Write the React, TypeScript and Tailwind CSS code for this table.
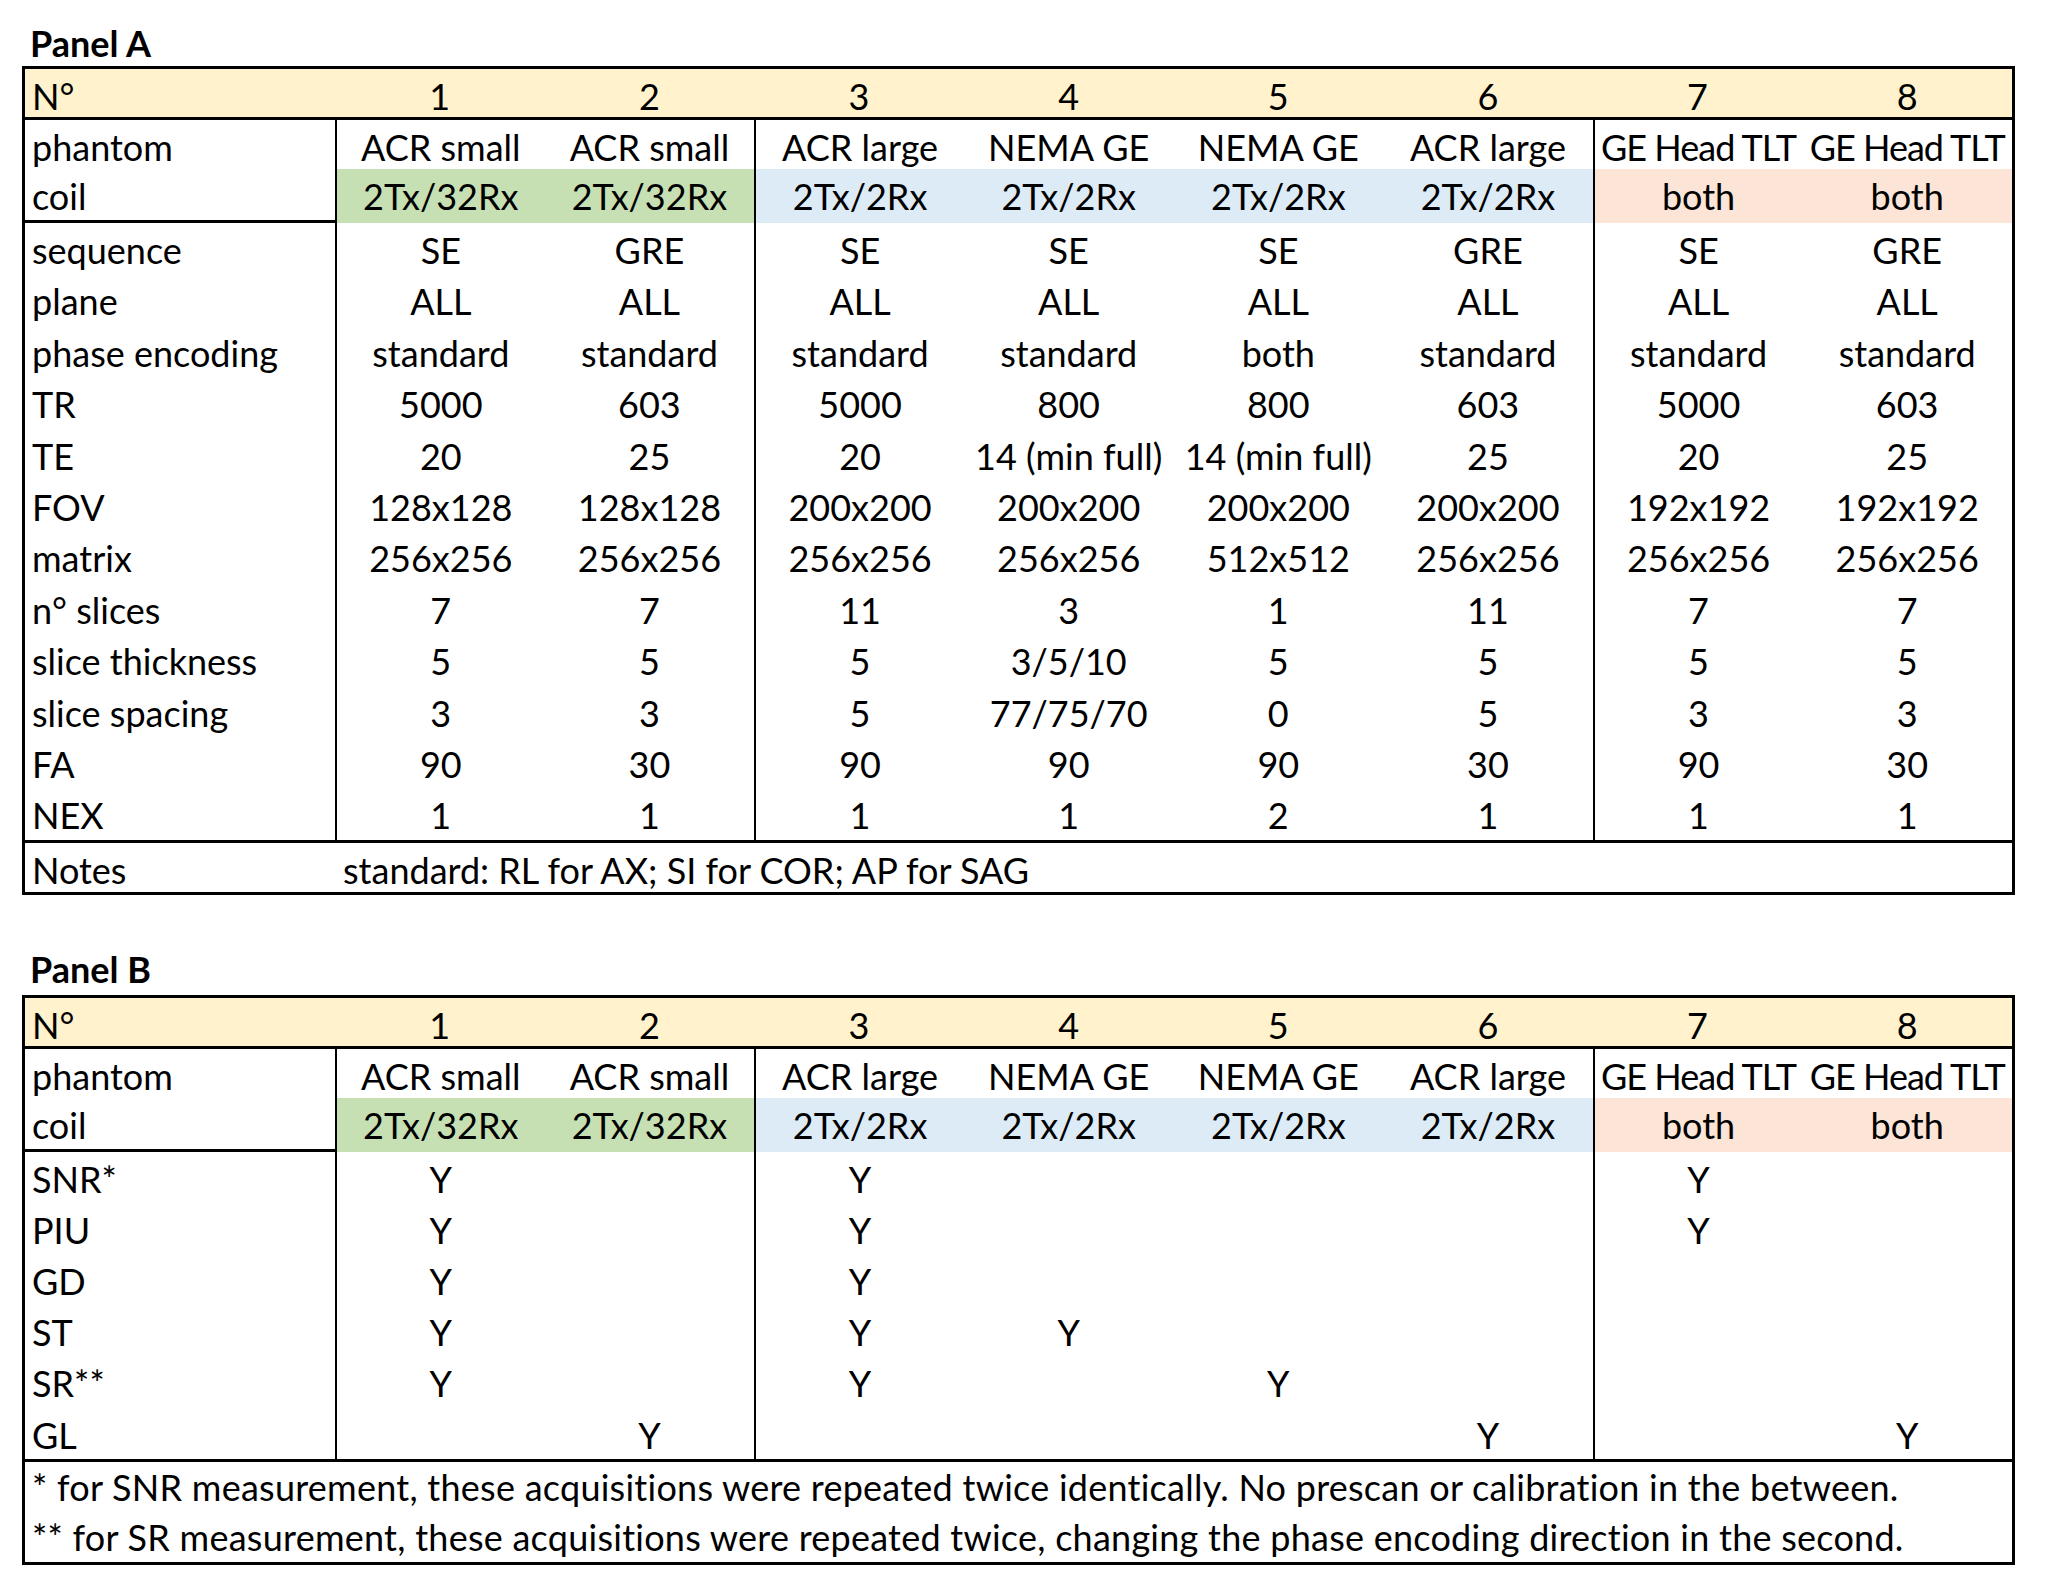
import clsx from "clsx";

type RowDef = { label: string; values: string[] };

const setupRows: RowDef[] = [
  { label: "sequence", values: ["SE", "GRE", "SE", "SE", "SE", "GRE", "SE", "GRE"] },
  { label: "plane", values: ["ALL", "ALL", "ALL", "ALL", "ALL", "ALL", "ALL", "ALL"] },
  {
    label: "phase encoding",
    values: ["standard", "standard", "standard", "standard", "both", "standard", "standard", "standard"],
  },
  { label: "TR", values: ["5000", "603", "5000", "800", "800", "603", "5000", "603"] },
  { label: "TE", values: ["20", "25", "20", "14 (min full)", "14 (min full)", "25", "20", "25"] },
  {
    label: "FOV",
    values: ["128x128", "128x128", "200x200", "200x200", "200x200", "200x200", "192x192", "192x192"],
  },
  {
    label: "matrix",
    values: ["256x256", "256x256", "256x256", "256x256", "512x512", "256x256", "256x256", "256x256"],
  },
  { label: "n° slices", values: ["7", "7", "11", "3", "1", "11", "7", "7"] },
  { label: "slice thickness", values: ["5", "5", "5", "3/5/10", "5", "5", "5", "5"] },
  { label: "slice spacing", values: ["3", "3", "5", "77/75/70", "0", "5", "3", "3"] },
  { label: "FA", values: ["90", "30", "90", "90", "90", "30", "90", "30"] },
  { label: "NEX", values: ["1", "1", "1", "1", "2", "1", "1", "1"] },
];

const checkRows: RowDef[] = [
  { label: "SNR*", values: ["Y", "", "Y", "", "", "", "Y", ""] },
  { label: "PIU", values: ["Y", "", "Y", "", "", "", "Y", ""] },
  { label: "GD", values: ["Y", "", "Y", "", "", "", "", ""] },
  { label: "ST", values: ["Y", "", "Y", "Y", "", "", "", ""] },
  { label: "SR**", values: ["Y", "", "Y", "", "Y", "", "", ""] },
  { label: "GL", values: ["", "Y", "", "", "", "Y", "", "Y"] },
];

const numbers = ["1", "2", "3", "4", "5", "6", "7", "8"];
const phantoms = [
  "ACR small",
  "ACR small",
  "ACR large",
  "NEMA GE",
  "NEMA GE",
  "ACR large",
  "GE Head TLT",
  "GE Head TLT",
];
const coils = ["2Tx/32Rx", "2Tx/32Rx", "2Tx/2Rx", "2Tx/2Rx", "2Tx/2Rx", "2Tx/2Rx", "both", "both"];

// coil groups: green = small ACR, blue = large ACR / NEMA, peach = GE head
const coilBg = [
  "bg-[#C6E0B4]",
  "bg-[#C6E0B4]",
  "bg-[#DDEBF7]",
  "bg-[#DDEBF7]",
  "bg-[#DDEBF7]",
  "bg-[#DDEBF7]",
  "bg-[#FCE4D6]",
  "bg-[#FCE4D6]",
];

// vertical separators sit left of columns 1, 3 and 7
const divider = [true, false, true, false, false, false, true, false];

function Row({
  label,
  values,
  height,
  lines = true,
  bgs,
}: {
  label: string;
  values: string[];
  height: string;
  lines?: boolean;
  bgs?: string[];
}) {
  return (
    <div className={clsx("grid grid-cols-[310px_repeat(8,minmax(0,1fr))]", height)}>
      <div className="flex items-center pl-[7px] whitespace-nowrap">{label}</div>
      {values.map((v, i) => (
        <div
          key={i}
          className={clsx(
            "flex items-center justify-center whitespace-nowrap",
            lines && divider[i] && "border-l-2 border-black",
            v === "GE Head TLT" && "tracking-[-1px]",
            bgs?.[i]
          )}
        >
          {v}
        </div>
      ))}
    </div>
  );
}

function TableHead() {
  return (
    <>
      <div className="h-[51px] border-b-[3px] border-black bg-[#FFF2CC]">
        <Row label="N°" values={numbers} height="h-full" lines={false} />
      </div>
      <div className="border-b-[3px] border-black">
        <Row label="phantom" values={phantoms} height="h-[49px]" />
        <Row label="coil" values={coils} height="h-[51px]" bgs={coilBg} />
      </div>
    </>
  );
}

function PanelTitle({ children, className }: { children: string; className?: string }) {
  return (
    <div className={clsx("h-[38px] pl-[8px] leading-[38px] font-bold", className)}>
      {children}
    </div>
  );
}

export default function App() {
  return (
    <div className="min-h-screen bg-white pt-[24px] pl-[22px] text-[36px] text-black font-['Lato',sans-serif]">
      <PanelTitle className="mb-[4px]">Panel A</PanelTitle>
      <div className="w-[1993px] border-[3px] border-black">
        <TableHead />
        <div className="border-b-[3px] border-black">
          {setupRows.map((r) => (
            <Row key={r.label} label={r.label} values={r.values} height="h-[51.4px]" />
          ))}
        </div>
        <div className="grid h-[49px] grid-cols-[310px_1fr]">
          <div className="flex items-center pl-[7px]">Notes</div>
          <div className="flex items-center pl-[8px]">standard: RL for AX; SI for COR; AP for SAG</div>
        </div>
      </div>

      <PanelTitle className="mt-[55px] mb-[7px]">Panel B</PanelTitle>
      <div className="w-[1993px] border-[3px] border-black">
        <TableHead />
        <div className="border-b-[3px] border-black">
          {checkRows.map((r) => (
            <Row key={r.label} label={r.label} values={r.values} height="h-[51.2px]" />
          ))}
        </div>
        <div className="flex h-[50px] items-center pl-[7px] tracking-[0.25px] whitespace-nowrap">
          * for SNR measurement, these acquisitions were repeated twice identically. No prescan or calibration in the between.
        </div>
        <div className="flex h-[50px] items-center pl-[7px] tracking-[0.25px] whitespace-nowrap">
          ** for SR measurement, these acquisitions were repeated twice, changing the phase encoding direction in the second.
        </div>
      </div>
    </div>
  );
}
